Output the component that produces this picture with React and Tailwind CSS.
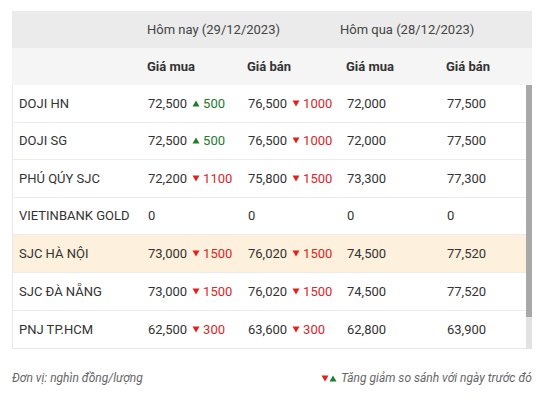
import React from 'react';

const rows = [
  { name: 'DOJI HN', buy: '72,500', buyDiff: { dir: 'up', v: '500' }, sell: '76,500', sellDiff: { dir: 'down', v: '1000' }, yBuy: '72,000', ySell: '77,500' },
  { name: 'DOJI SG', buy: '72,500', buyDiff: { dir: 'up', v: '500' }, sell: '76,500', sellDiff: { dir: 'down', v: '1000' }, yBuy: '72,000', ySell: '77,500' },
  { name: 'PHÚ QÚY SJC', buy: '72,200', buyDiff: { dir: 'down', v: '1100' }, sell: '75,800', sellDiff: { dir: 'down', v: '1500' }, yBuy: '73,300', ySell: '77,300' },
  { name: 'VIETINBANK GOLD', buy: '0', sell: '0', yBuy: '0', ySell: '0' },
  { name: 'SJC HÀ NỘI', buy: '73,000', buyDiff: { dir: 'down', v: '1500' }, sell: '76,020', sellDiff: { dir: 'down', v: '1500' }, yBuy: '74,500', ySell: '77,520', hl: true },
  { name: 'SJC ĐÀ NẴNG', buy: '73,000', buyDiff: { dir: 'down', v: '1500' }, sell: '76,020', sellDiff: { dir: 'down', v: '1500' }, yBuy: '74,500', ySell: '77,520' },
  { name: 'PNJ TP.HCM', buy: '62,500', buyDiff: { dir: 'down', v: '300' }, sell: '63,600', sellDiff: { dir: 'down', v: '300' }, yBuy: '62,800', ySell: '63,900' },
];

const cols = 'grid grid-cols-[129px_100px_99px_100px_1fr] px-[6px]';

const Tri = ({ dir }) => (
  <svg width="8" height="7" viewBox="0 0 8 7" className="inline-block">
    {dir === 'up' ? (
      <path d="M4 0.5 L7.5 6.5 L0.5 6.5 Z" fill="#1e7e2c" />
    ) : (
      <path d="M0.5 0.5 L7.5 0.5 L4 6.5 Z" fill="#e3201b" />
    )}
  </svg>
);

const Price = ({ value, diff }) => (
  <div className="flex items-center">
    <span>{value}</span>
    {diff && (
      <span className={`ml-[5px] flex items-center gap-[3px] ${diff.dir === 'up' ? 'text-[#237a2f]' : 'text-[#d8262b]'}`}>
        <Tri dir={diff.dir} />
        {diff.v}
      </span>
    )}
  </div>
);

export default function App() {
  return (
    <div className="w-[544px] h-[401px] bg-white pt-[11px] px-[12px] text-[13px] text-[#333]" style={{ fontFamily: 'Roboto, "Liberation Sans", sans-serif' }}>
      <div className="w-[520px]">
        <div className={`${cols} h-[37px] items-center bg-[#ebebeb] text-[#444]`}>
          <div></div>
          <div className="col-span-2">Hôm nay (29/12/2023)</div>
          <div className="col-span-2 ml-[-6px]">Hôm qua (28/12/2023)</div>
        </div>
        <div className={`${cols} h-[37px] items-center bg-[#f5f5f5] font-bold text-[#333]`}>
          <div></div>
          <div>Giá mua</div>
          <div>Giá bán</div>
          <div>Giá mua</div>
          <div>Giá bán</div>
        </div>
        <div className="flex h-[264px]">
          <div className="flex-1 border-l border-b border-[#e8e8e8]">
            {rows.map((r, i) => (
              <div
                key={i}
                className={`${cols} h-[37.6px] items-center ${i < rows.length - 1 ? 'border-b border-[#ececec]' : ''} ${r.hl ? 'bg-[#fdf0dc]' : 'bg-white'}`}
              >
                <div>{r.name}</div>
                <Price value={r.buy} diff={r.buyDiff} />
                <Price value={r.sell} diff={r.sellDiff} />
                <div>{r.yBuy}</div>
                <div>{r.ySell}</div>
              </div>
            ))}
          </div>
          {/* scrollbar */}
          <div className="w-[6px] flex flex-col bg-[#e2e2e2]">
            <div className="h-[232px] bg-[#a8a8a8]"></div>
          </div>
        </div>
      </div>
      <div className="flex justify-between items-center mt-[20px] text-[12px] italic text-[#666]">
        <span>Đơn vị: nghìn đồng/lượng</span>
        <span className="flex items-center">
          <Tri dir="down" />
          <Tri dir="up" />
          <span className="ml-[4px]">Tăng giảm so sánh với ngày trước đó</span>
        </span>
      </div>
    </div>
  );
}
